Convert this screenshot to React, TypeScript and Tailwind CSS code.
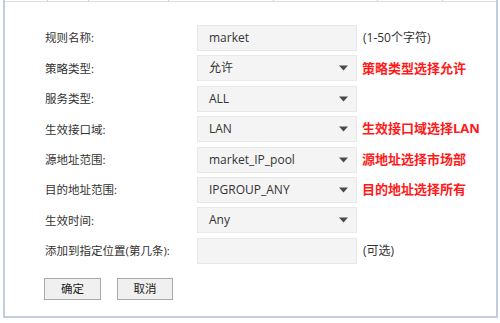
const font = { fontFamily: '"Open Sans", "Noto Sans CJK SC", sans-serif' };

type Row = {
  label: string;
  value: string;
  select?: boolean;
  hint?: string;
  note?: string;
};

const rows: Row[] = [
  { label: '规则名称:', value: 'market', note: '(1-50个字符)' },
  { label: '策略类型:', value: '允许', select: true, hint: '策略类型选择允许' },
  { label: '服务类型:', value: 'ALL', select: true },
  { label: '生效接口域:', value: 'LAN', select: true, hint: '生效接口域选择LAN' },
  { label: '源地址范围:', value: 'market_IP_pool', select: true, hint: '源地址选择市场部' },
  { label: '目的地址范围:', value: 'IPGROUP_ANY', select: true, hint: '目的地址选择所有' },
  { label: '生效时间:', value: 'Any', select: true },
  { label: '添加到指定位置(第几条):', value: '', note: '(可选)' },
];

function Caret() {
  return (
    <svg width="9" height="6" viewBox="0 0 9 6" className="shrink-0">
      <path d="M0 0.5 L9 0.5 L4.5 5.5 Z" fill="#4a4a4a" />
    </svg>
  );
}

export default function App() {
  return (
    <div className="w-[500px] h-[323px] bg-white overflow-hidden" style={font}>
      <div className="ml-[3px] w-[495px] h-[318px] flex flex-col border-l-2 border-r-2 border-b-2 border-[#bfcfdf]">
        {/* cut-off table strip above */}
        <div className="flex h-[2px] border-b border-[#dcdcdc]">
          <div className="w-[43px] border-r border-[#cfcfcf]" />
          <div className="w-[41px] border-r border-[#cfcfcf]" />
          <div className="w-[80px] border-r border-[#cfcfcf]" />
          <div className="w-[105px] border-r border-[#cfcfcf]" />
          <div className="w-[104px] border-r border-[#cfcfcf]" />
          <div className="w-[65px] border-r border-[#cfcfcf]" />
        </div>

        <div className="pl-[40px] pt-[23px] flex flex-col gap-[4.4px]">
          {rows.map((r, i) => (
            <div key={i} className="flex items-center h-[26px]">
              <div className="w-[152px] text-[11.5px] text-[#333]">{r.label}</div>
              <div className="w-[160px] h-[26px] bg-[#f4f4f4] border border-[#e8e8e8] flex items-center justify-between pl-[11px] pr-[8px] text-[12px] text-[#333]">
                <span>{r.value}</span>
                {r.select && <Caret />}
              </div>
              {r.hint && (
                <span className="ml-[5px] text-[13px] font-bold text-[#ff1a1a]">{r.hint}</span>
              )}
              {r.note && <span className="ml-[6px] text-[12px] text-[#333]">{r.note}</span>}
            </div>
          ))}
        </div>

        <div className="pl-[39px] mt-[14px] flex gap-[16px]">
          <button className="w-[57px] h-[22px] bg-[#f0f0f0] border border-[#a9a9a9] text-[11.5px] text-[#222]">确定</button>
          <button className="w-[56px] h-[22px] bg-[#f0f0f0] border border-[#a9a9a9] text-[11.5px] text-[#222]">取消</button>
        </div>
      </div>
    </div>
  );
}
